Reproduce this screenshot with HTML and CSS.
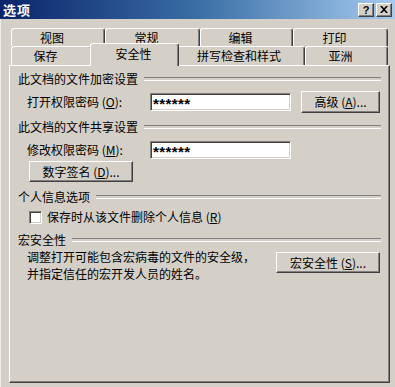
FILE: index.html
```html
<!DOCTYPE html>
<html lang="zh">
<head>
<meta charset="utf-8">
<title>选项</title>
<link rel="stylesheet" href="styles.css">
</head>
<body>
<div class="window">
  <div class="titlebar">
    <span class="title">选项</span>
    <div class="tbtns">
      <span class="tbtn help">?</span>
      <span class="tbtn close">
        <svg width="8" height="7" viewBox="0 0 8 7"><path d="M0 0h2l2 2.2L6 0h2L5 3.5 8 7H6L4 4.8 2 7H0l3-3.5z" fill="#000"/></svg>
      </span>
    </div>
  </div>
  <div class="client">
    <div class="tabs">
      <div class="tabrow row1">
        <div class="tab t-view">视图</div>
        <div class="tab t-general">常规</div>
        <div class="tab t-edit">编辑</div>
        <div class="tab t-print">打印</div>
      </div>
      <div class="tabrow row2">
        <div class="tab t-save">保存</div>
        <div class="tab t-security active">安全性</div>
        <div class="tab t-spell">拼写检查和样式</div>
        <div class="tab t-asia">亚洲</div>
      </div>
    </div>
    <div class="panel">
      <div class="ghead g1"><span>此文档的文件加密设置</span></div>
      <div class="frow open-row">
        <label class="flabel">打开权限密码 (<u>O</u>):</label>
        <div class="field">******</div>
        <div class="btn btn-adv">高级 (<u>A</u>)...</div>
      </div>
      <div class="ghead g2"><span>此文档的文件共享设置</span></div>
      <div class="frow modify-row">
        <label class="flabel">修改权限密码 (<u>M</u>):</label>
        <div class="field">******</div>
      </div>
      <div class="btn btn-sign">数字签名 (<u>D</u>)...</div>
      <div class="ghead g3"><span>个人信息选项</span></div>
      <div class="checkrow">
        <span class="checkbox"></span>
        <span class="clabel">保存时从该文件删除个人信息 (<u>R</u>)</span>
      </div>
      <div class="ghead g4"><span>宏安全性</span></div>
      <div class="macro">
        <div class="mtext">
          <div class="mline">调整打开可能包含宏病毒的文件的安全级，</div>
          <div class="mline">并指定信任的宏开发人员的姓名。</div>
        </div>
        <div class="btn btn-macro">宏安全性 (<u>S</u>)...</div>
      </div>
    </div>
  </div>
</div>
</body>
</html>
```

FILE: styles.css
```css
* { box-sizing: border-box; }
html, body {
  margin: 0;
  padding: 0;
  width: 395px;
  height: 387px;
  overflow: hidden;
  background: #d4d0c8;
}
body {
  font-family: "Noto Sans CJK SC", "Liberation Sans", sans-serif;
  font-size: 12px;
  color: #000;
}
.window {
  width: 395px;
  height: 387px;
  display: flex;
  flex-direction: column;
}
.titlebar {
  height: 19px;
  flex: 0 0 19px;
  display: flex;
  align-items: center;
  justify-content: space-between;
  padding-left: 3px;
  background: linear-gradient(to right, #0a246a 0%, #3a6ea5 50%, #a6caf0 100%);
}
.title {
  color: #fff;
  font-weight: 700;
  font-size: 13px;
  letter-spacing: 1px;
  line-height: 14px;
}
.tbtns {
  display: flex;
  gap: 2px;
  margin-right: 3px;
}
.tbtn {
  width: 16px;
  height: 14px;
  background: #d4d0c8;
  border: 1px solid;
  border-color: #fff #404040 #404040 #fff;
  box-shadow: inset -1px -1px 0 #808080;
  display: flex;
  align-items: center;
  justify-content: center;
}
.help {
  font-family: "Liberation Sans", sans-serif;
  font-weight: 700;
  font-size: 11px;
  line-height: 10px;
}
.client {
  flex: 1;
  box-shadow: inset 1px 0 0 #efeee9;
}
.tabs {
  margin-top: 9px;
  margin-left: 11px;
  width: 377px;
}
.tabrow {
  display: flex;
  align-items: flex-start;
}
.row1 { height: 18px; }
.row2 { height: 19px; }
.tab {
  background: #d4d0c8;
  border-top: 1px solid #fff;
  border-left: 1px solid #fff;
  border-right: 1px solid #404040;
  box-shadow: inset -1px 0 0 #808080;
  border-radius: 3px 3px 0 0;
  text-align: center;
  padding-right: 12px;
}
.row1 .tab { height: 18px; line-height: 17px; }
.row2 .tab { height: 19px; line-height: 18px; }
.t-view { width: 94px; }
.t-general { width: 95px; }
.t-edit { width: 93px; }
.t-print { width: 95px; }
.t-save { width: 81px; }
.t-spell { width: 128px; padding-right: 4px; }
.t-asia { width: 83px; }
.row2 .tab.active {
  position: relative;
  z-index: 2;
  width: 89px;
  height: 23px;
  margin: -3px -2px -1px;
  padding-right: 2px;
  line-height: 19px;
}
.panel {
  margin-left: 9px;
  width: 381px;
  height: 318px;
  border: 1px solid;
  border-color: #fff #404040 #404040 #fff;
  box-shadow: inset -1px -1px 0 #808080;
  padding: 6px 8px 0 8px;
}
.ghead {
  height: 14px;
  line-height: 14px;
  display: flex;
  align-items: center;
}
.ghead::after {
  content: "";
  flex: 1;
  height: 2px;
  margin-left: 6px;
  border-top: 1px solid #808080;
  border-bottom: 1px solid #fff;
}
.g2 { margin-top: 7px; }
.g3 { margin-top: 8px; }
.g4 { margin-top: 9px; }
.frow {
  display: flex;
  align-items: center;
}
.open-row { margin-top: 5px; height: 22px; }
.modify-row { margin-top: 7px; height: 18px; }
.flabel {
  flex: 0 0 123px;
  margin-left: 9px;
  line-height: 14px;
}
.field {
  width: 141px;
  height: 18px;
  background: #fff;
  border: 1px solid;
  border-color: #808080 #fff #fff #808080;
  box-shadow: inset 1px 1px 0 #404040, inset -1px -1px 0 #d4d0c8;
  font-family: "Liberation Sans", sans-serif;
  font-size: 15px;
  font-weight: 700;
  line-height: 20px;
  padding-left: 2px;
  letter-spacing: 0.4px;
  overflow: hidden;
}
.btn {
  background: #d4d0c8;
  border: 1px solid;
  border-color: #fff #404040 #404040 #fff;
  box-shadow: inset -1px -1px 0 #808080;
  display: flex;
  align-items: center;
  justify-content: center;
  line-height: 14px;
}
.btn-adv {
  width: 79px;
  height: 22px;
  margin-left: 10px;
}
.btn-sign {
  width: 104px;
  height: 21px;
  margin-top: 2px;
  margin-left: 11px;
}
.checkrow {
  margin-top: 6px;
  height: 14px;
  display: flex;
  align-items: center;
}
.checkbox {
  width: 13px;
  height: 13px;
  margin-left: 11px;
  background: #fff;
  border: 1px solid;
  border-color: #808080 #fff #fff #808080;
  box-shadow: inset 1px 1px 0 #404040, inset -1px -1px 0 #d4d0c8;
}
.clabel {
  margin-left: 5px;
  line-height: 14px;
}
.macro {
  margin-top: 1px;
  display: flex;
  align-items: flex-start;
}
.mtext {
  margin-left: 9px;
  width: 249px;
}
.mline {
  height: 17px;
  line-height: 17px;
}
.btn-macro {
  width: 104px;
  height: 21px;
  margin-top: 4px;
}
u { text-decoration: underline; text-underline-offset: 1px; }
```
